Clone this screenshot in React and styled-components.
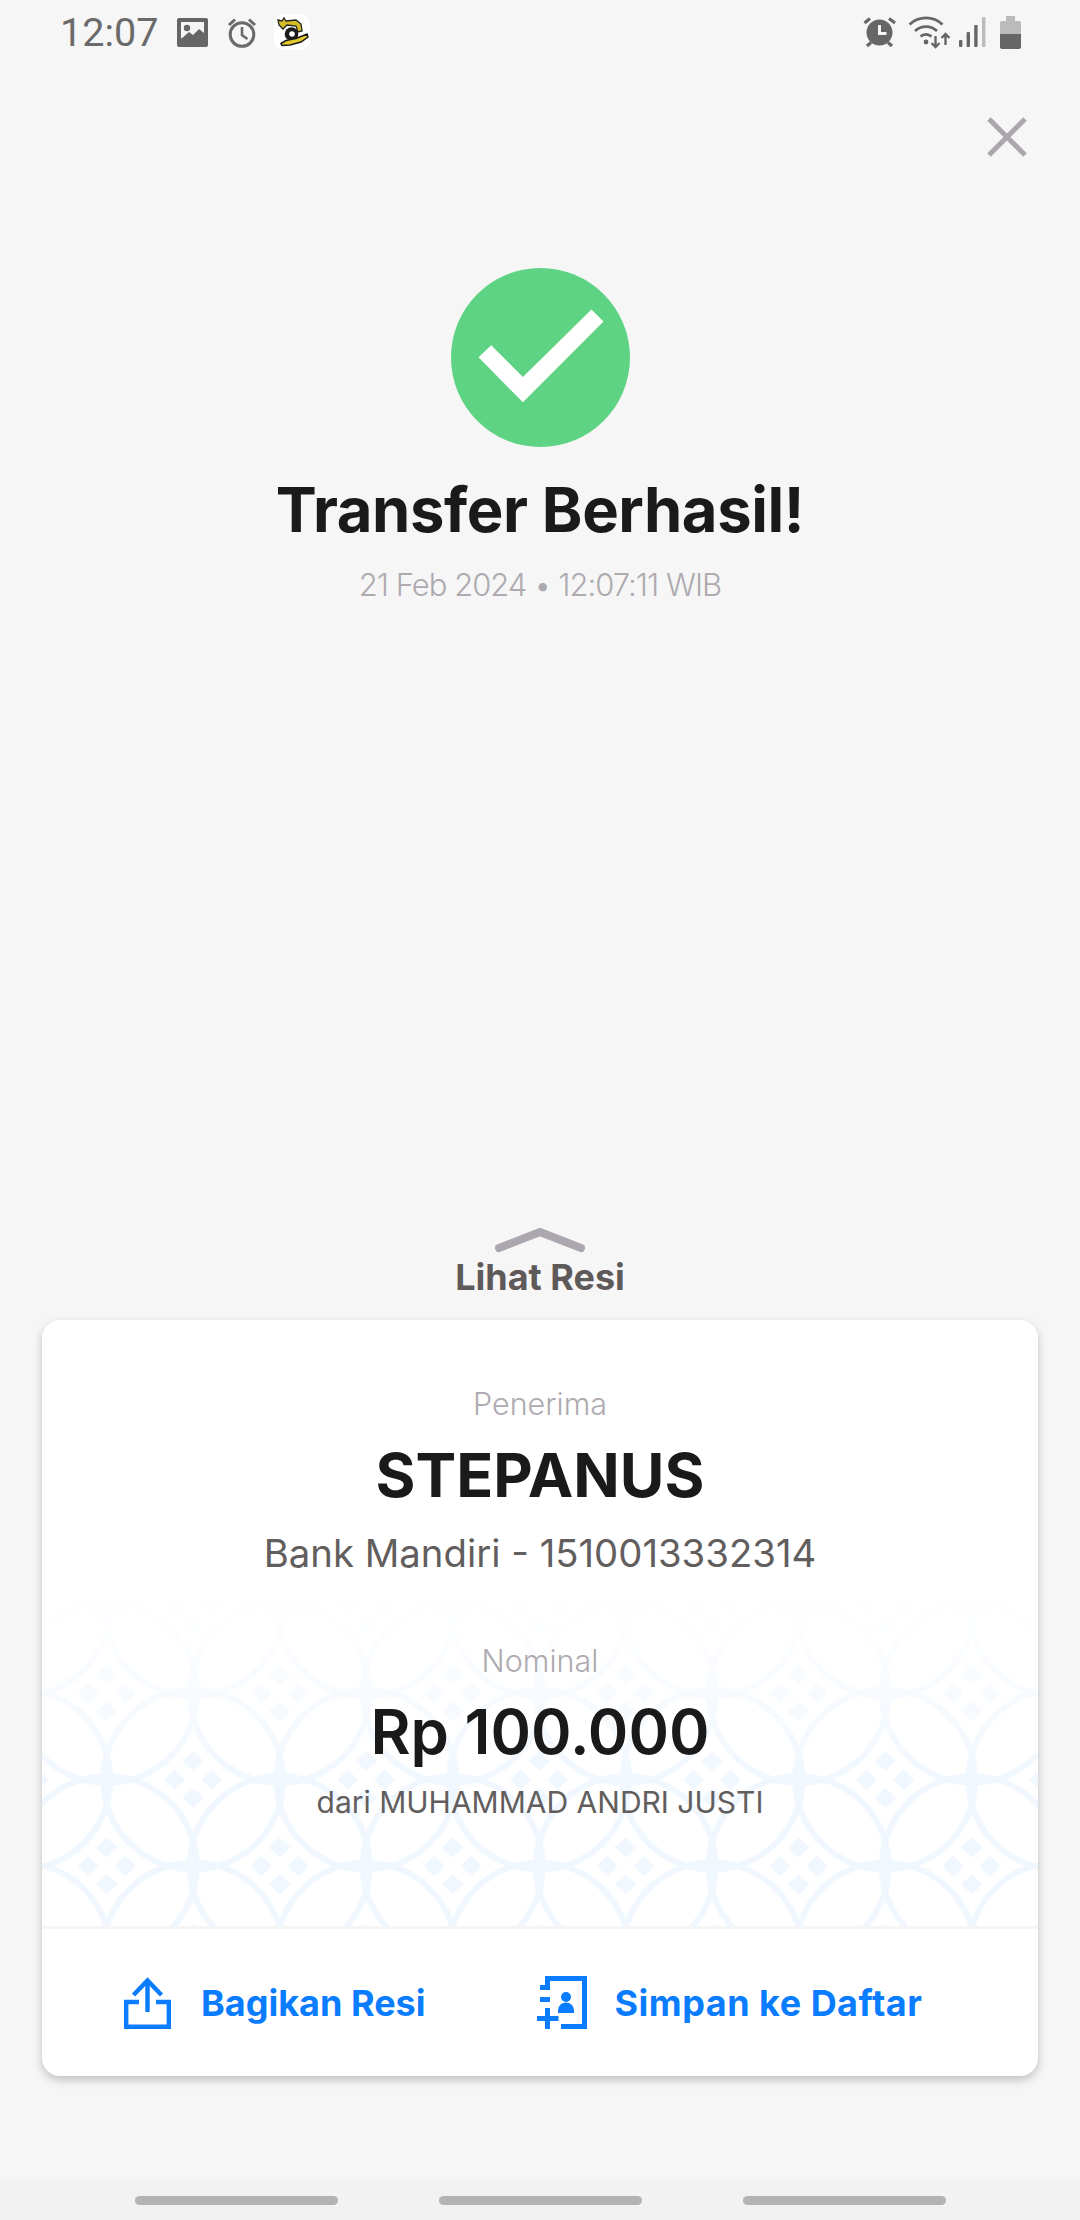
import React from "react";
import styled, { createGlobalStyle } from "styled-components";

const GlobalStyle = createGlobalStyle`
  html, body {
    margin: 0;
    padding: 0;
    background: #f6f6f6;
  }
  * {
    box-sizing: border-box;
  }
`;

const Page = styled.div`
  width: 1080px;
  height: 2220px;
  display: flex;
  flex-direction: column;
  background: #f6f6f6;
  font-family: Inter, "Liberation Sans", sans-serif;
  overflow: hidden;
`;

/* status bar */
const StatusBar = styled.div`
  height: 64px;
  display: flex;
  align-items: center;
  justify-content: space-between;
  padding: 0 59px 0 60px;
`;

const StatusGroup = styled.div`
  display: flex;
  align-items: center;
`;

const StatusSlot = styled.span`
  display: flex;
  margin-left: ${(p) => p.$left || 0}px;
`;

const Clock = styled.span`
  font-family: Roboto, sans-serif;
  font-size: 39.5px;
  line-height: 46px;
  color: #6a6a6a;
  padding-top: 2px;
`;

const CloseRow = styled.div`
  display: flex;
  justify-content: flex-end;
  padding: 53px 53px 0 0;
`;

/* success header */
const Success = styled.div`
  display: flex;
  flex-direction: column;
  align-items: center;
  padding-top: 111px;
`;

const Title = styled.h1`
  margin: 27px 0 0;
  font-size: 61.5px;
  line-height: 72px;
  font-weight: 700;
  color: #1a1a1a;
  letter-spacing: -0.4px;
`;

const DateText = styled.div`
  margin-top: 19px;
  font-size: 31px;
  line-height: 40px;
  font-weight: 300;
  color: #aeaab0;
  letter-spacing: -1px;
`;

/* receipt */
const Bottom = styled.div`
  margin-top: auto;
  display: flex;
  flex-direction: column;
  align-items: center;
  padding: 0 42px 104px;
`;

const Expand = styled.div`
  display: flex;
  flex-direction: column;
  align-items: center;
  gap: 4px;
  margin-bottom: 23px;
`;

const ExpandLabel = styled.div`
  font-size: 36px;
  line-height: 40px;
  font-weight: 700;
  color: #5f5a5a;
`;

const Card = styled.div`
  width: 996px;
  background: #fff;
  border-radius: 18px;
  box-shadow: 0 4px 10px rgba(0, 0, 0, 0.22);
  overflow: hidden;
`;

const CardBody = styled.div`
  position: relative;
  height: 606px;
  padding-top: 64px;
  display: flex;
  flex-direction: column;
  align-items: center;
  text-align: center;
`;

const Batik = styled.svg`
  position: absolute;
  left: 0;
  bottom: 0;
`;

const Label = styled.div`
  position: relative;
  font-size: ${(p) => p.$size}px;
  line-height: 40px;
  font-weight: 300;
  color: #aeaab0;
  margin-top: ${(p) => p.$top || 0}px;
`;

const Name = styled.div`
  position: relative;
  font-size: ${(p) => p.$size}px;
  line-height: 70px;
  font-weight: ${(p) => p.$weight};
  color: #1a1a1a;
  margin-top: 16px;
`;

const Detail = styled.div`
  position: relative;
  font-size: ${(p) => p.$size}px;
  line-height: ${(p) => p.$line}px;
  font-weight: 400;
  color: #625e5e;
  margin-top: ${(p) => p.$top}px;
`;

const Actions = styled.div`
  height: 150px;
  border-top: 3px solid #f5f5f5;
  display: flex;
  align-items: center;
  padding-left: 82px;
`;

const Action = styled.div`
  display: flex;
  align-items: center;
  gap: ${(p) => p.$gap}px;
  margin-right: ${(p) => p.$after || 0}px;
  font-size: 36px;
  line-height: 44px;
  font-weight: 700;
  color: #0a7cff;
  letter-spacing: ${(p) => p.$spacing || 0}px;
`;

/* android nav */
const NavBar = styled.div`
  height: 40px;
  background: #f2f2f2;
  display: flex;
  justify-content: center;
  gap: 101px;
  padding-top: 16px;
`;

const NavPill = styled.div`
  width: 203px;
  height: 9px;
  border-radius: 5px;
  background: #b3b3b3;
`;

const ImageIcon = () => (
  <svg width="31" height="29" viewBox="0 0 31 29">
    <rect width="31" height="29" rx="2" fill="#666" />
    <rect x="4" y="4" width="23" height="16" fill="#f6f6f6" />
    <circle cx="10" cy="10" r="3.2" fill="#666" />
    <path d="M4 21 12 14l4 3 6-6 5 4v7H4z" fill="#666" />
  </svg>
);

const AlarmOutline = () => (
  <svg width="30" height="31" viewBox="0 0 30 31" fill="none" stroke="#6a6a6a">
    <circle cx="15" cy="17.5" r="11.8" strokeWidth="3" />
    <path d="M15 10v8l5.5 4" strokeWidth="2.6" />
    <path d="M2 8 8 2.5M28 8l-6-5.5" strokeWidth="3" />
  </svg>
);

const AppBadge = () => (
  <svg width="36" height="36" viewBox="0 0 36 36">
    <rect width="36" height="36" rx="10" fill="#fff" />
    <path d="M4 6l4 1 2-3 2 3 10-1 5 4 1 7-4 1-2-6-9-1-4 4-4-4z" fill="#d6be2a" stroke="#222" strokeWidth="1.3" />
    <circle cx="17.5" cy="20" r="6.8" fill="#1a1a1a" />
    <circle cx="18" cy="20" r="2.8" fill="#fff" />
    <path d="M7 29.500l5-3 10-2 11-4.500 1 3-7 5-11 3-8 .5z" fill="#e3cb2b" stroke="#1a1a1a" strokeWidth="1.5" />
  </svg>
);

const AlarmFilled = () => (
  <svg width="34" height="32" viewBox="0 0 34 32" fill="none">
    <circle cx="16.5" cy="16.5" r="13" fill="#666" />
    <path d="M16.5 9v8.5h7" stroke="#f6f6f6" strokeWidth="3" />
    <path d="M1.5 7 7 2.5M32 7l-6-4.5M4 30l4-3.5M29 30l-4-3.5" stroke="#666" strokeWidth="3.2" />
  </svg>
);

const WifiIcon = () => (
  <svg width="43" height="34" viewBox="0 0 43 34" fill="none" stroke="#666">
    <path d="M1.5 9.5a24 24 0 0 1 33 0" strokeWidth="2.8" />
    <path d="M7 16a16 16 0 0 1 22 0" strokeWidth="2.8" />
    <path d="M12.5 21.5a8 8 0 0 1 11 0" strokeWidth="2.8" />
    <circle cx="18" cy="27" r="2.4" fill="#666" stroke="none" />
    <path d="M27.5 21v11M23.5 28l4 4 4-4" strokeWidth="2.4" />
    <path d="M37.5 30V19M33.5 23l4-4 4 4" strokeWidth="2.4" />
  </svg>
);

const SignalIcon = () => (
  <svg width="27" height="30" viewBox="0 0 27 30">
    <rect x="0" y="23" width="3.4" height="7" rx="1" fill="#666" />
    <rect x="7.6" y="15" width="3.4" height="15" rx="1" fill="#666" />
    <rect x="15.2" y="8" width="3.4" height="22" rx="1" fill="#666" />
    <rect x="23" y="0" width="3.4" height="30" rx="1" fill="#bbb" />
  </svg>
);

const BatteryIcon = () => (
  <svg width="21" height="33" viewBox="0 0 21 33">
    <path d="M6 0h9v5H6z" fill="#bbb" />
    <rect y="5" width="21" height="14" rx="1.5" fill="#bbb" />
    <path d="M0 18h21v13a2 2 0 0 1-2 2H2a2 2 0 0 1-2-2z" fill="#666" />
  </svg>
);

const CloseIcon = () => (
  <svg width="40" height="40" viewBox="0 0 40 40" stroke="#aca6ae" strokeWidth="5">
    <path d="M2 2l36 36M38 2 2 38" />
  </svg>
);

const CheckCircle = () => (
  <svg width="179" height="179" viewBox="0 0 179 179">
    <circle cx="89.5" cy="89.5" r="89.5" fill="#5ed384" />
    <path d="M27.5 89.3 40.2 77.3 71.9 109 140.5 41.6 152.5 53.6 71.9 134.3z" fill="#fff" />
  </svg>
);

const Chevron = () => (
  <svg width="90" height="26" viewBox="0 0 90 26" fill="none">
    <path d="M4 21 45 5l41 16" stroke="#aca6ae" strokeWidth="8" strokeLinecap="round" strokeLinejoin="round" />
  </svg>
);

const ShareIcon = () => (
  <svg width="47" height="52" viewBox="0 0 47 52" fill="none" stroke="#0a7cff" strokeWidth="4.4">
    <path d="M15 25H2.2v24.8h42.6V25H32" />
    <path d="M23.5 4v31M9.5 18 23.5 3.5 37.5 18" />
  </svg>
);

const ContactIcon = () => (
  <svg width="50" height="53" viewBox="0 0 50 53" fill="#0a7cff">
    <path d="M8 0h42v53H24v-5h21V5H13v6H8z" />
    <path d="M3 9h10v5H3zM3 21h10v5H3z" />
    <path d="M8 21h5v5H8zM8 32h5v8h8.500v5H13v8H8v-8H0v-5h8z" />
    <circle cx="29" cy="21" r="5" />
    <path d="M21 37v-3a8 7.500 0 0 1 16 0v3z" />
  </svg>
);

const BatikPattern = () => (
  <Batik width="996" height="336" viewBox="0 0 996 336">
    <defs>
      <pattern id="kawung" width="173" height="173" patternUnits="userSpaceOnUse" patternTransform="translate(64.7 103)">
        <g fill="none" stroke="#f0f7ff" strokeWidth="6">
          <circle cx="0" cy="0" r="90" />
          <circle cx="173" cy="0" r="90" />
          <circle cx="0" cy="173" r="90" />
          <circle cx="173" cy="173" r="90" />
          <circle cx="86.500" cy="86.500" r="90" />
          <circle cx="-86.500" cy="86.500" r="90" />
          <circle cx="259.500" cy="86.500" r="90" />
          <circle cx="86.500" cy="-86.500" r="90" />
          <circle cx="86.500" cy="259.500" r="90" />
        </g>
        <g fill="#f0f7ff">
          <path d="M86.500 58l11 10-11 10-11-10zM86.500 95l11 10-11 10-11-10zM68 76l10.500 10.500L68 97 57.500 86.500zM105 76l10.500 10.500L105 97 94.500 86.500z" />
          <path d="M0-28.500l11 10-11 10-11-10zM0 8.500l11 10-11 10-11-10zM-18.500-10.500-8 0l-10.500 10.500L-29 0zM18.500-10.500 29 0 18.500 10.500 8 0z" />
          <path d="M173-28.500l11 10-11 10-11-10zM173 8.500l11 10-11 10-11-10zM154.500-10.500 165 0l-10.500 10.500L144 0z" />
          <path d="M0 144.500l11 10-11 10-11-10zM18.500 162.500 29 173 18.500 183.500 8 173zM173 144.500l11 10-11 10-11-10zM154.500 162.500 165 173l-10.500 10.500L144 173z" />
        </g>
      </pattern>
      <linearGradient id="fade" x1="0" y1="0" x2="0" y2="1">
        <stop offset="0" stopColor="#fff" stopOpacity="0" />
        <stop offset="0.6" stopColor="#fff" stopOpacity="1" />
      </linearGradient>
      <mask id="fadeMask">
        <rect width="996" height="336" fill="url(#fade)" />
      </mask>
    </defs>
    <rect width="996" height="336" fill="url(#kawung)" mask="url(#fadeMask)" />
  </Batik>
);

export default function App() {
  return (
    <Page>
      <GlobalStyle />
      <StatusBar>
        <StatusGroup>
          <Clock>12:07</Clock>
          <StatusSlot $left={19}><ImageIcon /></StatusSlot>
          <StatusSlot $left={19}><AlarmOutline /></StatusSlot>
          <StatusSlot $left={17}><AppBadge /></StatusSlot>
        </StatusGroup>
        <StatusGroup>
          <AlarmFilled />
          <StatusSlot $left={11}><WifiIcon /></StatusSlot>
          <StatusSlot $left={8}><SignalIcon /></StatusSlot>
          <StatusSlot $left={14}><BatteryIcon /></StatusSlot>
        </StatusGroup>
      </StatusBar>

      <CloseRow>
        <CloseIcon />
      </CloseRow>

      <Success>
        <CheckCircle />
        <Title>Transfer Berhasil!</Title>
        <DateText>21 Feb 2024 • 12:07:11 WIB</DateText>
      </Success>

      <Bottom>
        <Expand>
          <Chevron />
          <ExpandLabel>Lihat Resi</ExpandLabel>
        </Expand>
        <Card>
          <CardBody>
            <BatikPattern />
            <Label $size={30.5}>Penerima</Label>
            <Name $size={61} $weight={700}>STEPANUS</Name>
            <Detail $size={38.3} $line={50} $top={18}>Bank Mandiri - 1510013332314</Detail>
            <Label $size={30.5} $top={63}>Nominal</Label>
            <Name $size={61.5} $weight={600}>Rp 100.000</Name>
            <Detail $size={30} $line={40} $top={15}>dari MUHAMMAD ANDRI JUSTI</Detail>
          </CardBody>
          <Actions>
            <Action $gap={30} $after={111}>
              <ShareIcon />
              Bagikan Resi
            </Action>
            <Action $gap={28} $spacing={0.5}>
              <ContactIcon />
              Simpan ke Daftar
            </Action>
          </Actions>
        </Card>
      </Bottom>

      <NavBar>
        <NavPill />
        <NavPill />
        <NavPill />
      </NavBar>
    </Page>
  );
}
